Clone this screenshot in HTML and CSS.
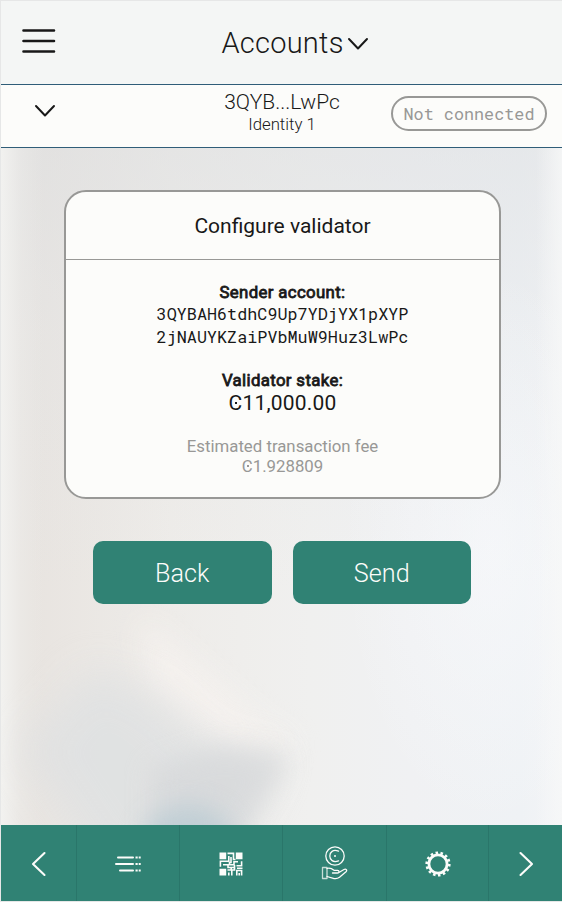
FILE: index.html
```
<!DOCTYPE html>
<html lang="en">
<head>
<meta charset="utf-8">
<title>Accounts</title>
<link rel="stylesheet" href="styles.css">
</head>
<body>
<div class="app">
  <header class="header">
    <svg class="menu" width="34" height="26" viewBox="0 0 34 26"><path d="M1.500 2.500h30.500M1.500 13h30.500M1.500 23.500h30.500"/></svg>
    <h1 class="title"><span>Accounts</span><svg class="chevron" width="22" height="14" viewBox="0 0 22 14"><path d="M2 2l9 9.500L20 2"/></svg></h1>
  </header>
  <section class="identity">
    <div class="toggle"><svg class="chevron" width="22" height="14" viewBox="0 0 22 14"><path d="M2 2l9 9.500L20 2"/></svg></div>
    <div class="names">
      <div class="account">3QYB...LwPc</div>
      <div class="owner">Identity 1</div>
    </div>
    <div class="status"><span class="pill">Not connected</span></div>
  </section>
  <main class="main">
    <svg class="backdrop" width="561" height="677" viewBox="0 0 561 677">
      <path class="glow" d="M140 470L260 575 300 600 230 600 150 540z"/>
      <path class="shade" d="M20 600L90 520 150 545 215 600 275 610 240 677 200 720H100z"/>
      <path class="tip" d="M150 620L215 600 290 608 235 700 150 700z"/>
      <ellipse class="pool" cx="187" cy="690" rx="45" ry="32"/>
    </svg>
    <article class="card">
      <h2 class="card-title">Configure validator</h2>
      <div class="card-body">
        <div class="label">Sender account:</div>
        <div class="address">3QYBAH6tdhC9Up7YDjYX1pXYP<br>2jNAUYKZaiPVbMuW9Huz3LwPc</div>
        <div class="label stake-label">Validator stake:</div>
        <div class="stake"><span class="ccd">C</span>11,000.00</div>
        <div class="fee">Estimated transaction fee<br><span class="ccd">C</span>1.928809</div>
      </div>
    </article>
    <div class="actions">
      <button class="btn">Back</button>
      <button class="btn">Send</button>
    </div>
  </main>
  <nav class="nav">
    <a class="tab"><svg class="line" width="16" height="26" viewBox="0 0 16 26"><path d="M13.500 2L2 13l11.500 11"/></svg></a>
    <a class="tab"><svg class="rows" width="28" height="18" viewBox="0 0 28 18"><path d="M4 2.500h15M2 9h17M6 15.500h13"/><path class="dots" d="M21.500 2.500h2.200M24.700 2.500h2M21.500 9h2.200M24.700 9h2M21.500 15.500h2.200M24.700 15.500h2"/></svg></a>
    <a class="tab"><svg class="qr" width="24" height="24" viewBox="0 0 24 24"><path class="solid" d="M.5.500h6.700v6.700H.5zM16.800.500h6.700v6.700h-6.700zM.5 16.800h6.700v6.700H.5z"/><path d="M8.500 1.400h6v6.100h2M9.800 4v5.200H1.400v5.500M4 12.800h5v2.700h2.500M12 5v5.500h-1.500v2.300h4.500V9.800h4M17.500 13.800h5.100V9.200M8.500 18h3.700v-2.500h3.300M9.800 23.500v-3M12.800 18v5.500M15.500 13v5h-2.700M17.800 23.500v-5h4.800v5M20.200 21v2.500M18 16.200h5.500"/></svg></a>
    <a class="tab"><svg class="earn" width="27" height="36" viewBox="0 0 27 36"><circle cx="14" cy="11" r="9.200"/><path d="M17.500 6.200C12 4 8.800 7.200 8.800 11s3.200 7 8.700 4.800"/><circle class="dot" cx="14" cy="11" r="1"/><path class="cuff" d="M1.500 22.500h4.500v11H1.500z"/><path d="M6 23.500c3-1 5 .2 7 1.800h3.500c2 0 2 2.700 0 2.700H11.500M17.500 27.800l5.500-3.300c2-1 3.500.7 2 2.300l-6.500 5.500c-2 1.500-5 1.500-7 .8L6 31.500"/></svg></a>
    <a class="tab"><svg class="gear" width="26" height="26" viewBox="0 0 26 26"><circle cx="13" cy="13" r="9.100"/><circle class="teeth" cx="13" cy="13" r="11" pathLength="140"/></svg></a>
    <a class="tab"><svg class="line" width="16" height="26" viewBox="0 0 16 26"><path d="M2.500 2L14 13 2.500 24"/></svg></a>
  </nav>
</div>
</body>
</html>
```
FILE: styles.css
```
* { box-sizing: border-box; }
body {
  margin: 0;
  background: #e6e7e7;
  color: #181818;
  font-family: Roboto, "Liberation Sans", sans-serif;
}
svg { display: block; fill: none; stroke-linecap: round; stroke-linejoin: round; }
.app {
  display: flex;
  flex-direction: column;
  height: 902px;
  padding: 1px 0 1px 1px;
}
.header {
  display: grid;
  grid-template-columns: 100px 1fr 100px;
  align-items: center;
  height: 84px;
  padding: 0 10px 0 21px;
  background: #f4f6f5;
  border-bottom: 1px solid #2f5d78;
}
.menu { stroke: #181818; stroke-width: 2.6; margin-top: -3px; }
.title {
  display: flex;
  align-items: center;
  justify-content: center;
  gap: 3px;
  margin: 0 -16px 0 0;
  font-size: 29px;
  font-weight: 300;
  letter-spacing: .25px;
  line-height: 34px;
}
.chevron { stroke: #181818; stroke-width: 2; }
.title .chevron { margin-top: 3px; }
.identity {
  display: grid;
  grid-template-columns: 170px 1fr 170px;
  height: 63px;
  background: #fcfcfa;
  border-bottom: 1px solid #2f5d78;
}
.toggle { padding: 19px 0 0 33px; }
.names { text-align: center; font-weight: 300; padding: 4px 0 0 1px; }
.account { font-size: 21px; line-height: 26px; }
.owner { font-size: 16.8px; line-height: 19px; }
.status { padding: 11px 15px 0 0; display: flex; justify-content: flex-end; align-items: flex-start; }
.pill {
  width: 156px;
  height: 35px;
  flex: none;
  border: 2px solid #989896;
  border-radius: 18px;
  color: #989896;
  font: 16.8px/32px "Roboto Mono", "Liberation Mono", monospace;
  text-align: center;
  white-space: nowrap;
}
.main {
  position: relative;
  z-index: 0;
  overflow: hidden;
  flex: 1;
  padding: 42px 61px 0 63px;
  background:
    linear-gradient(90deg, rgba(243,243,241,.9), rgba(240,240,238,.35) 20px, transparent 42px),
    linear-gradient(270deg, rgba(247,248,248,.8), transparent 26px),
    radial-gradient(ellipse 150px 280px at 490px 400px, rgba(249,250,252,.6), rgba(249,250,252,0)),
    linear-gradient(180deg, rgba(220,222,224,.5), rgba(225,227,229,.3) 180px, rgba(225,227,229,0) 440px),
    linear-gradient(90deg, #e8e4e0 30px, #eeece9 170px, #f0f0ef 310px, #f0f1f3 410px, #eff2f5 520px, #f3f4f6);
}
.backdrop { position: absolute; z-index: -1; left: 0; top: 0; }
.glow { fill: #f6f2ef; opacity: .9; filter: blur(14px); }
.shade { fill: #dfe1e2; opacity: .85; filter: blur(20px); }
.tip { fill: #d6d8da; opacity: .75; filter: blur(13px); }
.pool { fill: #b9cbd3; opacity: .8; filter: blur(13px); }
.card {
  height: 309px;
  border: 2px solid #989896;
  border-radius: 22px;
  background: #fcfcfa;
  text-align: center;
}
.card-title {
  height: 68px;
  margin: 0;
  border-bottom: 1px solid #989896;
  font-size: 21px;
  font-weight: 400;
  line-height: 68px;
}
.card-body { padding-top: 21px; }
.label {
  font-size: 16.8px;
  font-weight: 400;
  line-height: 22px;
  letter-spacing: .35px;
  -webkit-text-stroke: .8px #181818;
}
.address { font: 400 16.8px/23px "Roboto Mono", "Liberation Mono", monospace; margin-top: -1px; }
.stake-label { margin-top: 21px; }
.stake { font-size: 21px; line-height: 23px; letter-spacing: .2px; padding-top: 1px; }
.fee { margin-top: 21px; color: #989896; font-size: 16.8px; line-height: 20px; }
.ccd { position: relative; }
.ccd::after {
  content: "";
  position: absolute;
  left: 50%;
  top: 50%;
  width: 2px;
  height: 2px;
  margin: -1px 0 0 0;
  background: currentColor;
}
.actions { display: flex; gap: 21px; padding: 42px 30px 0 29px; }
.btn {
  flex: 1;
  height: 63px;
  padding: 1px 0 0;
  border: 0;
  border-radius: 10px;
  background: #308274;
  color: #fcfcfa;
  font: 300 25.2px/63px Roboto, "Liberation Sans", sans-serif;
}
.nav {
  display: grid;
  grid-template-columns: 76px 103px 103px 104px 102px 1fr;
  height: 76px;
  background: #308274;
}
.tab { display: flex; align-items: center; justify-content: center; padding-top: 1px; border-right: 1px solid #2a766a; }
.tab:last-child { border: 0; }
.nav svg { stroke: #fcfcfa; }
.line { stroke-width: 2.1; }
.rows { stroke-width: 2; }
.rows .dots { stroke-linecap: butt; }
.qr { stroke-width: 1.6; stroke-linecap: butt; stroke-linejoin: miter; }
.qr .solid, .earn .dot { fill: #fcfcfa; stroke: none; }
.earn { stroke-width: 1.3; margin-top: -2px; }
.earn .cuff { stroke-opacity: .75; }
.gear { stroke-width: 2.8; }
.gear .teeth { stroke-width: 3.2; stroke-dasharray: 5 5; stroke-linecap: butt; }
```
